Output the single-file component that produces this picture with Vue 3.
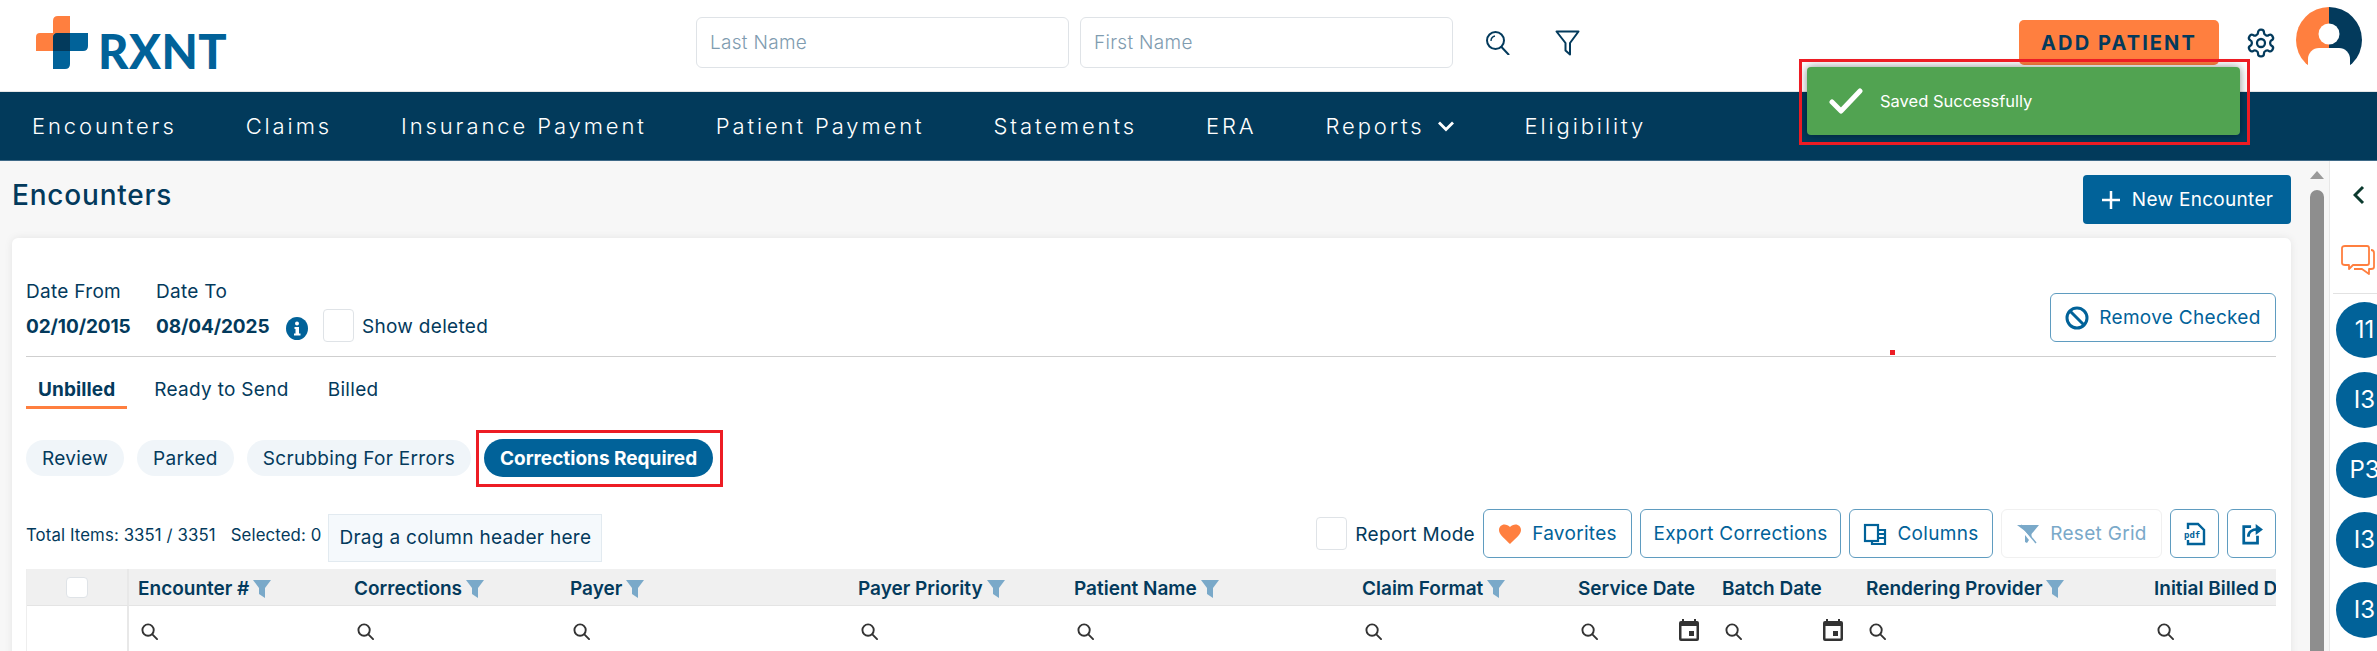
<script setup>
const navItems = ['Encounters', 'Claims', 'Insurance Payment', 'Patient Payment', 'Statements', 'ERA', 'Reports', 'Eligibility']
const pills = ['Review', 'Parked', 'Scrubbing For Errors']
const columns = [
  { name: 'Encounter #', filter: true },
  { name: 'Corrections', filter: true },
  { name: 'Payer', filter: true },
  { name: 'Payer Priority', filter: true },
  { name: 'Patient Name', filter: true },
  { name: 'Claim Format', filter: true },
  { name: 'Service Date', date: true },
  { name: 'Batch Date', date: true },
  { name: 'Rendering Provider', filter: true },
  { name: 'Initial Billed Date' }
]
const badges = ['11', 'I3', 'P3', 'I3', 'I3']
</script>

<template>
  <div class="app">
    <header class="topbar">
      <div class="logo">
        <svg class="logo-mark" viewBox="0 0 52 53">
          <path fill="#ff7f3f" d="M22 0H34V35H0V21Q0 17 4 17H17V5Q17 0 22 0Z" />
          <path fill="#016299" d="M17 22Q17 17 22 17H52V30Q52 35 47 35H34V48Q34 53 29 53H17Z" />
          <path fill="#033a5c" d="M17 22Q17 17 22 17H34V35H17Z" />
        </svg>
        <span class="logo-text">RXNT</span>
      </div>
      <input class="name-input" placeholder="Last Name" />
      <input class="name-input" placeholder="First Name" />
      <svg class="search-icon" viewBox="0 0 25 25" fill="none" stroke="#033a5c" stroke-width="2">
        <circle cx="10.5" cy="10.5" r="8.5" />
        <path d="M16.5 17l7 7.5" stroke-linecap="round" />
        <path d="M6 11c0-3 1.500-4.500 4-5" stroke-width="1.400" />
      </svg>
      <svg class="funnel-icon" viewBox="0 0 25 26" fill="none" stroke="#033a5c" stroke-width="2" stroke-linejoin="round">
        <path d="M1.500 1.500H23.500L15 13V24.500L10.500 20.500V13Z" />
      </svg>
      <button class="add-patient">ADD PATIENT</button>
      <svg class="gear-icon" viewBox="0 0 24 24" fill="none" stroke="#033a5c" stroke-width="1.700">
        <path d="M12.220 2h-.44a2 2 0 0 0-2 2v.18a2 2 0 0 1-1 1.730l-.43.250a2 2 0 0 1-2 0l-.15-.08a2 2 0 0 0-2.730.730l-.22.380a2 2 0 0 0 .730 2.730l.15.100a2 2 0 0 1 1 1.720v.510a2 2 0 0 1-1 1.740l-.15.090a2 2 0 0 0-.730 2.730l.22.380a2 2 0 0 0 2.730.730l.15-.08a2 2 0 0 1 2 0l.43.250a2 2 0 0 1 1 1.730V20a2 2 0 0 0 2 2h.44a2 2 0 0 0 2-2v-.18a2 2 0 0 1 1-1.730l.43-.25a2 2 0 0 1 2 0l.15.080a2 2 0 0 0 2.730-.730l.22-.390a2 2 0 0 0-.730-2.730l-.15-.08a2 2 0 0 1-1-1.740v-.5a2 2 0 0 1 1-1.740l.15-.09a2 2 0 0 0 .730-2.730l-.22-.38a2 2 0 0 0-2.730-.730l-.15.080a2 2 0 0 1-2 0l-.43-.25a2 2 0 0 1-1-1.730V4a2 2 0 0 0-2-2z" />
        <circle cx="12" cy="12" r="3" />
      </svg>
      <svg class="avatar" viewBox="0 0 66 66">
        <path fill="#ff7f3f" d="M33 0A33 33 0 0 0 33 66Z" />
        <path fill="#033a5c" d="M33 0A33 33 0 0 1 33 66Z" />
        <circle cx="33" cy="27" r="10.500" fill="#fff" />
        <rect x="12" y="41" width="42" height="30" rx="11" fill="#fff" />
      </svg>
    </header>

    <nav class="mainnav">
      <a v-for="item in navItems" :key="item" class="nav-link">
        {{ item }}
        <svg v-if="item === 'Reports'" class="nav-caret" viewBox="0 0 18 11" fill="none" stroke="#fff" stroke-width="2.800">
          <path d="M2 1.500L9 8.500L16 1.500" />
        </svg>
      </a>
    </nav>

    <div class="toast">
      <svg class="toast-check" viewBox="0 0 34 26" fill="none" stroke="#fff" stroke-width="5" stroke-linecap="round" stroke-linejoin="round">
        <path d="M3 14L12 23L31 3" />
      </svg>
      <span>Saved Successfully</span>
    </div>

    <div class="content">
      <main class="main">
        <div class="page-head">
          <h1>Encounters</h1>
          <button class="new-encounter">
            <svg viewBox="0 0 20 20" class="plus-icon" fill="none" stroke="#fff" stroke-width="2.500"><path d="M10 1V19M1 10H19" /></svg>
            New Encounter
          </button>
        </div>

        <section class="card">
          <span class="red-dot"></span>
          <div class="date-row">
            <div class="filters">
              <div class="date-col"><label>Date From</label><strong>02/10/2015</strong></div>
              <div class="date-col"><label>Date To</label><strong>08/04/2025</strong></div>
              <svg class="info-icon" viewBox="0 0 22 23">
                <ellipse cx="11" cy="11.500" rx="11" ry="11.500" fill="#016299" />
                <circle cx="11" cy="6.500" r="2" fill="#fff" />
                <path fill="#fff" d="M8.500 10H13V16.500H14.500V18.500H8V16.500H9.500V12H8.500Z" />
              </svg>
              <span class="checkbox show-box"></span>
              <span class="show-label">Show deleted</span>
            </div>
            <button class="outline-btn remove-btn">
              <svg viewBox="0 0 24 24" class="ban-icon" fill="none" stroke="#016299" stroke-width="3"><circle cx="12" cy="12" r="10" /><path d="M5 5L19 19" /></svg>
              Remove Checked
            </button>
          </div>

          <div class="tabs">
            <span class="tab active">Unbilled</span>
            <span class="tab">Ready to Send</span>
            <span class="tab">Billed</span>
          </div>

          <div class="pills">
            <span v-for="pill in pills" :key="pill" class="pill">{{ pill }}</span>
            <span class="pill selected">Corrections Required</span>
          </div>

          <div class="toolbar">
            <span class="counts">Total Items: 3351 / 3351</span>
            <span class="counts selected-count">Selected: 0</span>
            <div class="drag-box">Drag a column header here</div>
            <div class="actions">
              <span class="checkbox report-box"></span>
              <span class="report-label">Report Mode</span>
              <button class="outline-btn fav-btn">
                <svg viewBox="0 0 24 24" class="btn-icon"><path fill="#ff7f3f" d="M12 22l-1.450-1.320C5.400 15.360 1 12.280 1 8 1 4.900 3.400 2.500 6.500 2.500c1.740 0 4.410.810 5.500 2.590C13.090 3.310 15.760 2.500 17.500 2.500 20.600 2.500 23 4.900 23 8c0 4.280-4.400 7.360-9.550 12.540z" /></svg>
                Favorites
              </button>
              <button class="outline-btn export-btn">Export Corrections</button>
              <button class="outline-btn columns-btn">
                <svg viewBox="0 0 24 24" class="btn-icon" fill="none" stroke="#016299" stroke-width="2.200">
                  <rect x="2" y="3" width="13" height="16" />
                  <path d="M15 8H22V22H9V19" />
                  <path d="M15 12H22M15 16H22" />
                </svg>
                Columns
              </button>
              <button class="outline-btn reset-btn">
                <svg viewBox="0 0 24 22" class="btn-icon reset-icon">
                  <path fill="#7aa9c9" d="M1 2H23L15.500 11V15L9 8Z" />
                  <path fill="#7aa9c9" d="M9 12L13 17L11 20L9 19Z" />
                  <path d="M5 2L20 20" stroke="#7aa9c9" stroke-width="1.500" />
                </svg>
                Reset Grid
              </button>
              <button class="outline-btn square-btn">
                <svg viewBox="0 0 22 24" class="square-icon">
                  <path fill="none" stroke="#016299" stroke-width="2.400" d="M4 7V2H14L20 8V22H4V18" />
                  <rect x="0" y="8" width="16" height="9" fill="#fff" />
                  <text x="0" y="16" class="pdf-text">pdf</text>
                </svg>
              </button>
              <button class="outline-btn square-btn">
                <svg viewBox="0 0 24 24" class="square-icon" fill="none" stroke="#016299" stroke-width="3">
                  <path d="M11 4H3V22H18V14" />
                  <path d="M8 15C8 10 12 7 18 7" />
                  <path fill="#016299" stroke="none" d="M16 1L24 7L16 13Z" />
                </svg>
              </button>
            </div>
          </div>

          <div class="grid-table">
            <div class="head-cell check-cell"><span class="checkbox head-check"></span></div>
            <div v-for="col in columns" :key="col.name" class="head-cell">
              <span class="head-name">{{ col.name }}</span>
              <svg v-if="col.filter" class="col-funnel" viewBox="0 0 18 18"><path fill="#7aa9c9" d="M0 0H18L12 8V18L6 14V8Z" /></svg>
            </div>
            <div class="filter-cell check-filter"></div>
            <div v-for="col in columns" :key="col.name + '-filter'" class="filter-cell">
              <svg class="cell-search" viewBox="0 0 18 18" fill="none" stroke="#333" stroke-width="2">
                <circle cx="7.500" cy="7.500" r="6" />
                <path d="M12 12L17 17" stroke-linecap="round" />
              </svg>
              <svg v-if="col.date" class="cell-calendar" viewBox="0 0 20 22">
                <path fill="#333" d="M3 0H5V2H15V0H17V2H18Q20 2 20 4V20Q20 22 18 22H2Q0 22 0 20V4Q0 2 2 2H3Z" />
                <rect x="2.500" y="7" width="15" height="12.500" fill="#fff" />
                <rect x="10" y="12" width="5" height="5" fill="#333" />
              </svg>
            </div>
          </div>
        </section>
      </main>

      <div class="scrollbar">
        <span class="scroll-arrow"></span>
        <span class="scroll-thumb"></span>
      </div>

      <aside class="side">
        <svg class="side-chevron" viewBox="0 0 12 20" fill="none" stroke="#0b3a2e" stroke-width="3"><path d="M10 2L2 10L10 18" /></svg>
        <svg class="side-chat" viewBox="0 0 34 31" fill="none" stroke="#ff7f3f" stroke-width="1.800" stroke-linejoin="round">
          <path d="M4 1H26Q28 1 28 3V18Q28 20 26 20H12L8 24V20H4Q1 20 1 18V3Q1 1 4 1Z" />
          <path d="M30 5Q33 5 33 8V22Q33 24 30 24H28V29L21 24H13" />
        </svg>
        <div class="side-line"></div>
        <div class="badges">
          <span v-for="(badge, i) in badges" :key="i" class="badge">{{ badge }}</span>
        </div>
      </aside>
    </div>
  </div>
</template>

<style scoped>
.app {
  position: relative;
  width: 2377px;
  height: 651px;
  overflow: hidden;
  display: flex;
  flex-direction: column;
  background: #f7f7f7;
  color: #033a5c;
  font-family: Inter, "Noto Sans", sans-serif;
  font-size: 19px;
  letter-spacing: 0.3px;
}

button {
  font-family: inherit;
  letter-spacing: inherit;
  cursor: pointer;
}

.topbar {
  flex: none;
  height: 85px;
  border-bottom: 1px solid #e6e6e6;
  background: #fff;
  display: flex;
  align-items: center;
  padding: 0 15px 6px 36px;
  box-sizing: content-box;
}

.logo {
  width: 660px;
  display: flex;
  align-items: flex-end;
  gap: 10px;
  flex: none;
}

.logo-mark {
  width: 52px;
  height: 53px;
}

.logo-text {
  font-family: Lato, sans-serif;
  font-size: 47px;
  font-weight: 900;
  line-height: 40px;
  letter-spacing: 0.500px;
  color: #016299;
  margin-bottom: -2px;
}

.name-input {
  width: 373px;
  height: 51px;
  box-sizing: border-box;
  margin-right: 11px;
  padding: 0 13px;
  border: 1px solid #dfe3e7;
  border-radius: 6px;
  font-family: inherit;
  font-size: 19px;
  letter-spacing: 0.3px;
  font-weight: 300;
  outline: none;
}

.name-input::placeholder {
  color: #7f9cb0;
  opacity: 1;
}

.search-icon {
  width: 25px;
  height: 25px;
  margin-left: 21px;
}

.funnel-icon {
  width: 25px;
  height: 26px;
  margin-left: 45px;
}

.add-patient {
  margin-left: auto;
  width: 200px;
  height: 45px;
  border: none;
  border-radius: 5px;
  background: #ff7f3f;
  color: #033a5c;
  font-size: 20px;
  font-weight: 700;
  letter-spacing: 2.100px;
}

.gear-icon {
  width: 32px;
  height: 32px;
  margin-left: 26px;
}

.avatar {
  width: 66px;
  height: 66px;
  margin: -6px 0 0 19px;
}

.mainnav {
  flex: none;
  height: 69px;
  box-sizing: border-box;
  border-bottom: 1px solid #3f6a88;
  background: #023a5b;
  display: flex;
  align-items: center;
  gap: 69px;
  padding-left: 32px;
}

.nav-link {
  display: flex;
  align-items: center;
  gap: 13px;
  color: #fff;
  font-size: 22px;
  font-weight: 300;
  letter-spacing: 2.900px;
  white-space: nowrap;
}

.nav-caret {
  width: 18px;
  height: 11px;
}

.toast {
  position: absolute;
  left: 1807px;
  top: 67px;
  width: 433px;
  height: 68px;
  box-sizing: border-box;
  padding-left: 22px;
  display: flex;
  align-items: center;
  gap: 17px;
  border-radius: 4px;
  background: #51a351;
  color: #fff;
  font-size: 16.500px;
  letter-spacing: 0;
  box-shadow: 0 0 10px rgba(0, 0, 0, 0.45);
}

.toast::after {
  content: "";
  position: absolute;
  inset: -8px -10px -10px -8px;
  border: 3px solid #ed1c24;
}

.toast-check {
  width: 34px;
  height: 26px;
}

.content {
  flex: 1;
  min-height: 0;
  display: flex;
}

.main {
  width: 2305px;
  box-sizing: border-box;
  padding: 14px 14px 0 12px;
  flex: none;
}

.page-head {
  display: flex;
  justify-content: space-between;
  align-items: flex-start;
  height: 49px;
  margin-bottom: 14px;
}

h1 {
  margin: 0;
  font-size: 28px;
  font-weight: 500;
  letter-spacing: 0.800px;
  line-height: 40px;
}

.new-encounter {
  width: 208px;
  height: 49px;
  border: none;
  border-radius: 4px;
  background: #016299;
  color: #fff;
  font-size: 19px;
  display: flex;
  align-items: center;
  justify-content: center;
  gap: 11px;
}

.plus-icon {
  width: 20px;
  height: 20px;
}

.card {
  position: relative;
  height: 500px;
  box-sizing: border-box;
  padding: 41px 15px 0 14px;
  border-radius: 6px;
  background: #fff;
  box-shadow: 0 0 8px rgba(0, 0, 0, 0.08);
}

.red-dot {
  position: absolute;
  left: 1878px;
  top: 112px;
  width: 5px;
  height: 5px;
  background: #ed1c24;
}

.date-row {
  display: flex;
  justify-content: space-between;
  align-items: flex-start;
  padding-bottom: 14px;
  border-bottom: 1px solid #cfcfcf;
}

.filters {
  display: flex;
  align-items: flex-end;
}

.date-col {
  width: 130px;
  display: flex;
  flex-direction: column;
  gap: 8px;
}

.date-col label {
  line-height: 26px;
}

.date-col strong {
  line-height: 28px;
  font-weight: 700;
  letter-spacing: -0.100px;
}

.info-icon {
  width: 22px;
  height: 23px;
  margin-bottom: 1px;
}

.checkbox {
  display: block;
  box-sizing: border-box;
  border: 1px solid #dfe3e7;
  border-radius: 4px;
  background: #fff;
}

.show-box {
  width: 31px;
  height: 33px;
  margin: 0 8px -1px 15px;
}

.show-label {
  line-height: 28px;
}

.outline-btn {
  height: 49px;
  box-sizing: border-box;
  border: 1px solid #5f9cc0;
  border-radius: 6px;
  background: #fff;
  color: #016299;
  font-size: 19px;
  display: flex;
  align-items: center;
  justify-content: center;
  gap: 10px;
  padding: 0;
  flex: none;
}

.remove-btn {
  width: 226px;
  margin-top: 14px;
}

.ban-icon {
  width: 24px;
  height: 24px;
}

.tabs {
  display: flex;
  gap: 15px;
  margin-top: 15px;
}

.tab {
  padding: 0 12px;
  line-height: 36px;
  height: 37px;
  box-sizing: border-box;
}

.tab.active {
  font-weight: 700;
  letter-spacing: 0.100px;
  border-bottom: 3px solid #ff7f3f;
}

.pills {
  display: flex;
  align-items: center;
  gap: 13px;
  margin-top: 30px;
  height: 38px;
}

.pill {
  height: 36px;
  padding: 0 16px;
  border-radius: 18px;
  background: #f0f5f9;
  line-height: 38px;
  white-space: nowrap;
}

.pill.selected {
  position: relative;
  height: 38px;
  line-height: 40px;
  border-radius: 19px;
  background: #016299;
  color: #fff;
  font-weight: 700;
  letter-spacing: 0;
}

.pill.selected::after {
  content: "";
  position: absolute;
  inset: -9px -10px -10px -8px;
  border: 3px solid #ed1c24;
}

.toolbar {
  display: flex;
  align-items: flex-start;
  height: 53px;
  margin-top: 32px;
}

.counts {
  font-size: 16.800px;
  letter-spacing: 0.100px;
  line-height: 20px;
  margin-top: 16px;
  white-space: nowrap;
}

.selected-count {
  margin-left: 15px;
}

.drag-box {
  height: 48px;
  box-sizing: border-box;
  margin: 5px 0 0 7px;
  padding: 0 10px;
  border: 1px solid #e2eaf0;
  background: #f5f9fc;
  line-height: 46px;
  white-space: nowrap;
}

.actions {
  margin-left: auto;
  display: flex;
  align-items: center;
  gap: 8px;
}

.report-box {
  width: 31px;
  height: 33px;
}

.report-label {
  white-space: nowrap;
  padding-top: 2px;
}

.btn-icon {
  width: 24px;
  height: 24px;
}

.fav-btn {
  width: 149px;
}

.export-btn {
  width: 201px;
}

.columns-btn {
  width: 144px;
}

.reset-btn {
  width: 161px;
  border-color: #f0f0f0;
  color: #7aa9c9;
}

.reset-icon {
  width: 24px;
  height: 22px;
}

.square-btn {
  width: 49px;
}

.square-icon {
  width: 22px;
  height: 24px;
}

.pdf-text {
  font-size: 9px;
  font-weight: 700;
  letter-spacing: 0;
  fill: #016299;
  font-family: "DejaVu Sans Mono", monospace;
}

.grid-table {
  margin-top: 7px;
  display: grid;
  grid-template-columns: 102px 216px 216px 288px 216px 288px 216px 144px 144px 288px 132px;
  grid-template-rows: 37px 45px;
  overflow: hidden;
  border-left: 1px solid #eee;
  box-sizing: border-box;
}

.head-cell {
  background: #f0f0f0;
  border-bottom: 1px solid #e4e4e4;
  box-sizing: border-box;
  padding: 3px 0 0 9px;
  display: flex;
  align-items: center;
  gap: 4px;
  font-weight: 600;
  letter-spacing: 0;
  white-space: nowrap;
  overflow: hidden;
}

.check-cell {
  justify-content: center;
  padding: 0;
  border-right: 2px solid #e8e8e8;
}

.head-check {
  width: 22px;
  height: 21px;
}

.col-funnel {
  width: 18px;
  height: 18px;
  flex: none;
}

.filter-cell {
  position: relative;
  background: #fff;
  box-sizing: border-box;
  padding: 6px 14px 0 12px;
  display: flex;
  align-items: center;
  justify-content: space-between;
}

.check-filter {
  border-right: 2px solid #e8e8e8;
}

.cell-search {
  width: 17px;
  height: 17px;
}

.cell-calendar {
  width: 20px;
  height: 22px;
  margin-bottom: 4px;
}

.scrollbar {
  flex: none;
  width: 24px;
  display: flex;
  flex-direction: column;
  align-items: center;
  box-sizing: border-box;
  padding: 10px 5px 0 5px;
}

.scroll-arrow {
  width: 0;
  height: 0;
  border-left: 7px solid transparent;
  border-right: 7px solid transparent;
  border-bottom: 8px solid #9a9a9a;
}

.scroll-thumb {
  flex: 1;
  width: 14px;
  margin-top: 11px;
  border-radius: 7px 7px 0 0;
  background: #8e8e8e;
}

.side {
  flex: none;
  width: 48px;
  box-sizing: border-box;
  border-left: 1px solid #e8e8e8;
  background: #fff;
  display: flex;
  flex-direction: column;
  overflow: hidden;
}

.side-chevron {
  width: 12px;
  height: 20px;
  margin: 24px 0 0 23px;
  flex: none;
}

.side-chat {
  width: 34px;
  height: 31px;
  margin: 40px 0 0 11px;
  flex: none;
}

.side-line {
  height: 1px;
  margin: 17px 0 0 3px;
  background: #e2e2e2;
  flex: none;
}

.badges {
  display: flex;
  flex-direction: column;
  gap: 14px;
  margin: 8px 0 0 6px;
}

.badge {
  flex: none;
  width: 57px;
  height: 56px;
  border-radius: 50%;
  background: #016299;
  color: #fff;
  font-size: 24px;
  letter-spacing: 0;
  line-height: 56px;
  text-align: center;
}
</style>

<style>
html, body {
  margin: 0;
  overflow: hidden;
}
</style>
